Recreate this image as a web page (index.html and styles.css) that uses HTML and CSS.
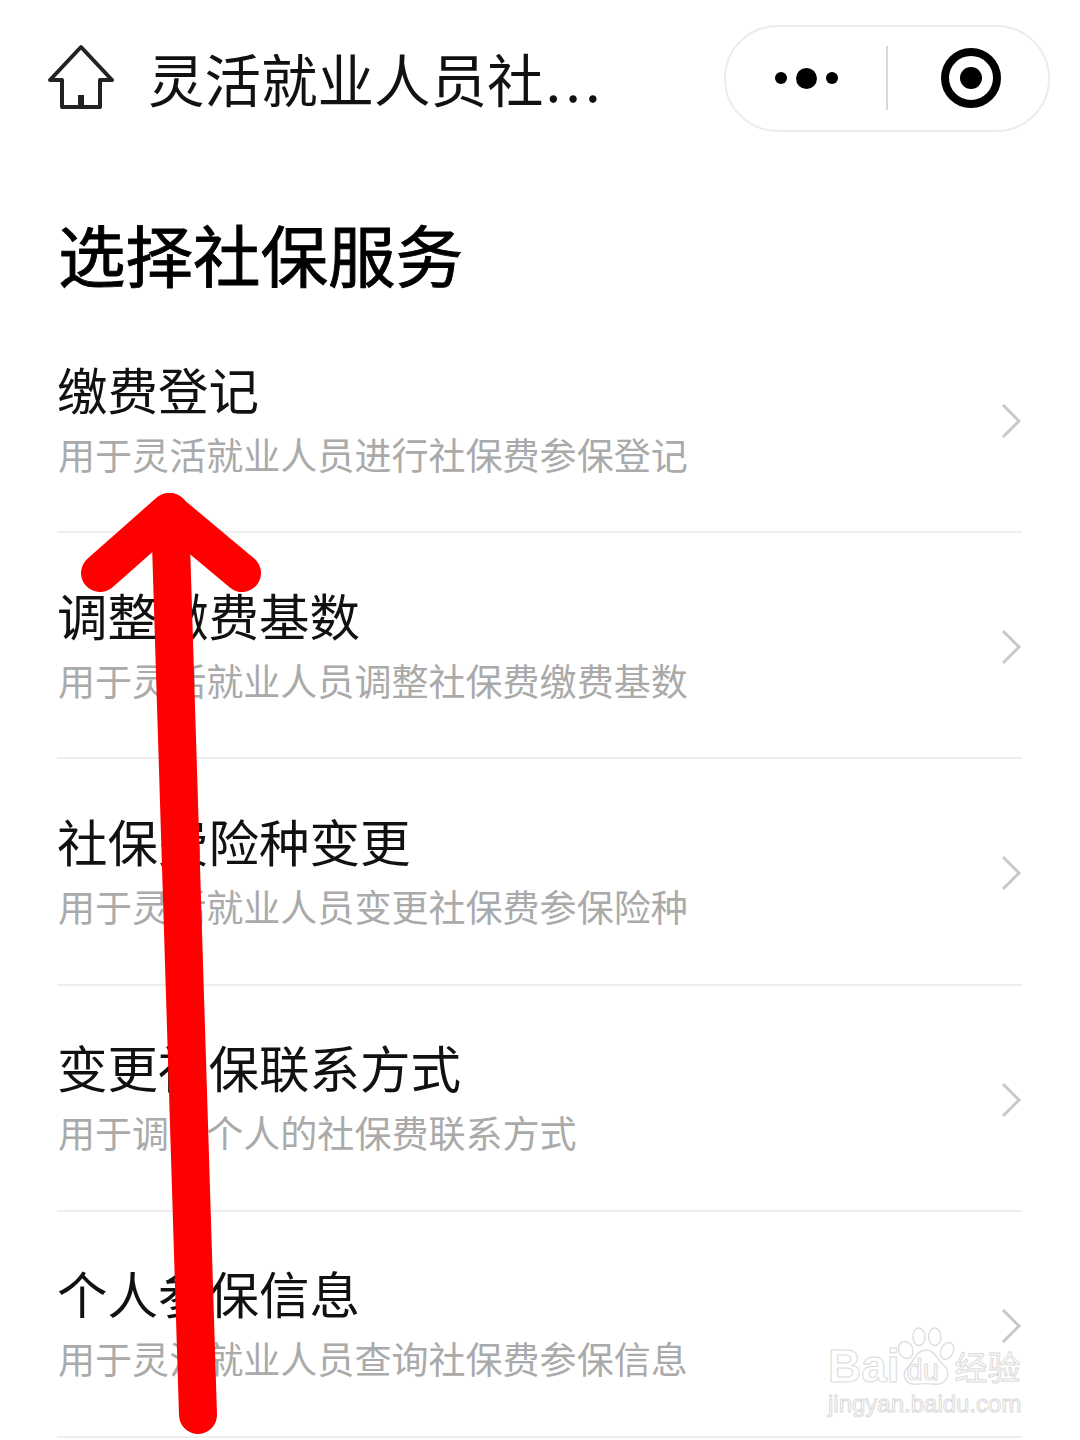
FILE: index.html
```html
<!DOCTYPE html>
<html lang="zh-CN">
<head>
<meta charset="utf-8">
<title>选择社保服务</title>
<link rel="stylesheet" href="styles.css">
</head>
<body>

<div class="page">
  <div class="nav">
    <svg class="home" width="70" height="68" viewBox="0 0 70 68">
      <path d="M35 3 L66 36 H54 V63 H16 V36 H4 Z" fill="none" stroke="#222" stroke-width="4" stroke-linejoin="round"/>
      <path d="M35 51 V63" stroke="#222" stroke-width="6"/>
    </svg>
    <div class="nav-title">灵活就业人员社<span class="nav-more">...</span></div>
    <div class="capsule">
      <div class="capsule-more">
        <span class="dot"></span>
        <span class="dot big"></span>
        <span class="dot"></span>
      </div>
      <div class="capsule-line"></div>
      <div class="capsule-close">
        <span class="ring"><span class="ring-core"></span></span>
      </div>
    </div>
  </div>

  <h1 class="heading">选择社保服务</h1>

  <div class="list">
    <div class="row">
      <div class="row-text">
        <div class="row-title">缴费登记</div>
        <div class="row-sub">用于灵活就业人员进行社保费参保登记</div>
      </div>
      <svg class="chevron" width="22" height="36" viewBox="0 0 22 36"><path d="M3 2 L19 18 L3 34" fill="none" stroke="#c8c8cc" stroke-width="3"/></svg>
    </div>
    <div class="row">
      <div class="row-text">
        <div class="row-title">调整缴费基数</div>
        <div class="row-sub">用于灵活就业人员调整社保费缴费基数</div>
      </div>
      <svg class="chevron" width="22" height="36" viewBox="0 0 22 36"><path d="M3 2 L19 18 L3 34" fill="none" stroke="#c8c8cc" stroke-width="3"/></svg>
    </div>
    <div class="row">
      <div class="row-text">
        <div class="row-title">社保费险种变更</div>
        <div class="row-sub">用于灵活就业人员变更社保费参保险种</div>
      </div>
      <svg class="chevron" width="22" height="36" viewBox="0 0 22 36"><path d="M3 2 L19 18 L3 34" fill="none" stroke="#c8c8cc" stroke-width="3"/></svg>
    </div>
    <div class="row">
      <div class="row-text">
        <div class="row-title">变更社保联系方式</div>
        <div class="row-sub">用于调整个人的社保费联系方式</div>
      </div>
      <svg class="chevron" width="22" height="36" viewBox="0 0 22 36"><path d="M3 2 L19 18 L3 34" fill="none" stroke="#c8c8cc" stroke-width="3"/></svg>
    </div>
    <div class="row">
      <div class="row-text">
        <div class="row-title">个人参保信息</div>
        <div class="row-sub">用于灵活就业人员查询社保费参保信息</div>
      </div>
      <svg class="chevron" width="22" height="36" viewBox="0 0 22 36"><path d="M3 2 L19 18 L3 34" fill="none" stroke="#c8c8cc" stroke-width="3"/></svg>
    </div>
  </div>

  <div class="watermark">
    <div class="mark-top">
      <span class="mark-bai">Bai</span>
      <span class="mark-paw">
        <svg width="58" height="66" viewBox="0 0 66 68">
          <g fill="#fff" stroke="#dedede" stroke-width="1.6">
            <ellipse cx="10" cy="26" rx="8" ry="10" transform="rotate(-25 10 26)"/>
            <ellipse cx="25" cy="11" rx="7" ry="10"/>
            <ellipse cx="43" cy="11" rx="7" ry="10"/>
            <ellipse cx="57" cy="27" rx="7" ry="10" transform="rotate(25 57 27)"/>
            <path d="M33 26 C44 26 46 38 54 44 C62 52 56 66 44 65 C36 64 30 64 22 65 C10 66 4 54 12 46 C20 38 22 26 33 26 Z"/>
          </g>
        </svg>
        <span class="mark-du">du</span>
      </span>
      <span class="mark-jy">经验</span>
    </div>
    <div class="mark-url">jingyan.baidu.com</div>
  </div>

  <svg class="arrow" width="1080" height="1440" viewBox="0 0 1080 1440">
    <path d="M170 512 L198 1415" fill="none" stroke="#fe0000" stroke-width="38" stroke-linecap="round"/>
    <path d="M100 573 L169 512 L242 573" fill="none" stroke="#fe0000" stroke-width="38" stroke-linecap="round" stroke-linejoin="round"/>
  </svg>
</div>

</body>
</html>
```

FILE: styles.css
```css
body{
  margin:0px;
  background:rgb(255,255,255);
  font-family:"Noto Sans CJK SC","Noto Sans",sans-serif;
}

.page{
  position:relative;
  width:1080px;
  height:1440px;
  overflow:hidden;
}

/* nav bar */
.nav{
  display:flex;
  align-items:center;
  height:106px;
  padding:25px 30px 0px 46px;
}
.home{
  display:block;
  flex:none;
}
.nav-title{
  flex:1;
  margin-left:32px;
  font-size:56.5px;
  line-height:100px;
  margin-bottom:2px;
  color:rgb(17,17,17);
  white-space:nowrap;
}
.nav-more{
  margin-left:2px;
  letter-spacing:4px;
}
.capsule{
  display:flex;
  align-items:center;
  flex:none;
  box-sizing:border-box;
  width:326px;
  height:107px;
  border:2px solid rgb(236,236,236);
  border-radius:54px;
}
.capsule-more{
  display:flex;
  align-items:center;
  justify-content:center;
  gap:9px;
  width:160px;
}
.dot{
  display:block;
  width:12px;
  height:12px;
  border-radius:50%;
  background:rgb(0,0,0);
}
.dot.big{
  width:21px;
  height:21px;
}
.capsule-line{
  width:2px;
  height:64px;
  background:rgb(216,216,216);
}
.capsule-close{
  display:flex;
  justify-content:center;
  flex:1;
  padding-left:6px;
}
.ring{
  display:flex;
  align-items:center;
  justify-content:center;
  box-sizing:border-box;
  width:60px;
  height:60px;
  border:8px solid rgb(0,0,0);
  border-radius:50%;
}
.ring-core{
  display:block;
  width:22px;
  height:22px;
  border-radius:50%;
  background:rgb(0,0,0);
}

/* heading */
.heading{
  margin:0px;
  padding:0px 0px 0px 58px;
  height:176px;
  font-size:67.5px;
  font-weight:400;
  line-height:244px;
  color:rgb(0,0,0);
  -webkit-text-stroke:0.9px rgb(0,0,0);
}

/* list */
.list{
  margin:0px 58px 0px 57px;
}
.row{
  display:flex;
  align-items:center;
  justify-content:space-between;
  box-sizing:border-box;
  height:226.2px;
  padding-bottom:6px;
  border-bottom:2px solid rgb(238,238,238);
}
.row-title{
  font-size:50.5px;
  line-height:70px;
  color:rgb(17,17,17);
}
.row-sub{
  margin-top:5px;
  padding-left:1px;
  font-size:37.05px;
  line-height:52px;
  color:rgb(170,170,170);
}
.chevron{
  display:block;
  flex:none;
  margin-top:10px;
}

/* baidu watermark, sits over the last row */
.watermark{
  position:absolute;
  left:828px;
  top:1324px;
  width:196px;
  color:rgb(255,255,255);
}
.mark-top{
  display:flex;
  align-items:flex-end;
  height:64px;
}
.mark-bai,.mark-du,.mark-jy,.mark-url{
  font-family:"Liberation Sans",sans-serif;
  -webkit-text-stroke:1px rgb(218,218,218);
}
.mark-bai{
  font-size:46px;
  font-weight:700;
  line-height:44px;
}
.mark-paw{
  position:relative;
  display:block;
  flex:none;
  width:58px;
  height:64px;
  margin-left:-3px;
}
.mark-paw svg{
  display:block;
}
.mark-du{
  position:absolute;
  left:10px;
  top:28px;
  font-size:29px;
  line-height:36px;
}
.mark-jy{
  flex:none;
  font-family:"Noto Sans CJK SC",sans-serif;
  font-size:33px;
  line-height:44px;
}
.mark-url{
  font-size:24px;
  line-height:30px;
  margin-top:1px;
  white-space:nowrap;
}

/* red hand-drawn arrow over everything */
.arrow{
  position:absolute;
  left:0px;
  top:0px;
}
```
